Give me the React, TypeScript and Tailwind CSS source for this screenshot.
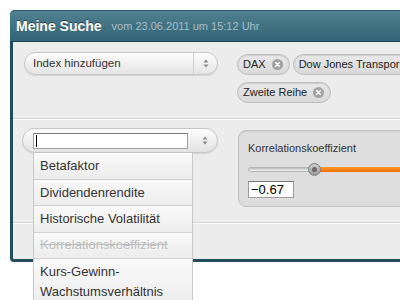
import React from "react";

const font = { fontFamily: '"Liberation Sans", Arial, sans-serif' };

function UpDown() {
  return (
    <svg width="6" height="9" viewBox="0 0 6 9">
      <path d="M3 0.5 L5.5 3.5 H0.5 Z" fill="#8a8a8a" />
      <path d="M3 8.5 L5.5 5.5 H0.5 Z" fill="#8a8a8a" />
    </svg>
  );
}

function CloseDot() {
  return (
    <span className="inline-flex items-center justify-center w-[11px] h-[11px] rounded-full bg-[#a3a3a3]">
      <svg width="5" height="5" viewBox="0 0 5 5">
        <path d="M0.7 0.7 L4.3 4.3 M4.3 0.7 L0.7 4.3" stroke="#fff" strokeWidth="1.4" strokeLinecap="round" />
      </svg>
    </span>
  );
}

function Tag({ label }: { label: string }) {
  return (
    <div className="shrink-0 flex items-center gap-[6px] h-[21px] pl-[5px] pr-[6px] rounded-full border border-[#bdbdbd] bg-gradient-to-b from-[#e9e9e9] to-[#d9d9d9] shadow-[inset_0_1px_1px_rgba(0,0,0,0.12)] text-[11px] text-[#222] whitespace-nowrap">
      <span>{label}</span>
      <CloseDot />
    </div>
  );
}

export default function App() {
  const items = ["Betafaktor", "Dividendenrendite", "Historische Volatilität"];
  return (
    <div className="w-[400px] h-[300px] bg-white overflow-hidden relative pt-[10px] pl-[10px]" style={font}>
      <div className="w-[430px] rounded-tl-[5px] rounded-bl-[4px] border-l-[3px] border-b-[3px] border-[#1f4d5d] bg-[#ececec]">
        {/* header */}
        <div className="h-[32px] -ml-[3px] rounded-tl-[5px] border-t border-b border-t-[#2a5a6b] border-b-[#1b4655] bg-gradient-to-b from-[#50818f] to-[#336476] flex items-center pl-[6px]">
          <span className="text-white font-bold text-[14px] [text-shadow:0_-1px_0_rgba(0,0,0,0.45)]">Meine Suche</span>
          <span className="ml-[10px] text-[11px] text-[#a8bfc8]">vom 23.06.2011 um 15:12 Uhr</span>
        </div>

        {/* section 1 */}
        <div className="h-[77px] flex items-start pt-[10px] border-b border-[#d6d6d6] shadow-[0_1px_0_#fafafa]">
          <div className="shrink-0 ml-[11px] w-[194px] h-[23px] rounded-full border border-[#c6c6c6] bg-gradient-to-b from-[#fdfdfd] to-[#e4e4e4] shadow-[0_1px_1px_rgba(0,0,0,0.1)] flex items-center">
            <span className="flex-1 pl-[8px] text-[11.5px] text-[#333]">Index hinzufügen</span>
            <span className="w-px h-[21px] bg-[#d0d0d0]" />
            <span className="w-[23px] flex justify-center"><UpDown /></span>
          </div>
          <div className="shrink-0 ml-[19px] mt-[2px] flex flex-col gap-[7px]">
            <div className="flex gap-[3px]">
              <Tag label="DAX" />
              <Tag label="Dow Jones Transport" />
            </div>
            <div className="flex">
              <Tag label="Zweite Reihe" />
            </div>
          </div>
        </div>

        {/* section 2 */}
        <div className="h-[104px] flex items-start border-b border-[#d6d6d6] shadow-[0_1px_0_#fafafa]">
          <div className="shrink-0 relative ml-[9px] mt-[9px] w-[196px] h-[25px] rounded-full border border-[#c6c6c6] bg-gradient-to-b from-[#fdfdfd] to-[#e2e2e2] shadow-[0_1px_1px_rgba(0,0,0,0.1)] flex items-center z-10">
            <div className="ml-[10px] w-[155px] h-[16px] bg-white border border-[#a0a0a0] border-t-[#7a7a7a] flex items-center pl-[2px]">
              <span className="w-px h-[12px] bg-black" />
            </div>
            <span className="flex-1 flex justify-center pl-[4px]"><UpDown /></span>
            <div className="absolute left-[10px] top-[24px] w-[160px] border-l border-r border-[#c8c8c8] bg-[#f2f2f2] text-[13px] text-[#333]">
              {items.map((t) => (
                <div key={t} className="h-[26.5px] flex items-center pl-[6px] border-b border-[#cfcfcf] bg-gradient-to-b from-[#fafafa] to-[#ececec]">{t}</div>
              ))}
              <div className="h-[26px] flex items-center pl-[6px] border-b border-[#cfcfcf] bg-gradient-to-b from-[#fafafa] to-[#ececec] text-[#bdbdbd] line-through">Korrelationskoeffizient</div>
              <div className="pl-[6px] pt-[3px] pb-[6px] leading-[20px] bg-gradient-to-b from-[#fafafa] to-[#ececec]">Kurs-Gewinn-<br />Wachstumsverhältnis</div>
            </div>
          </div>
          <div className="shrink-0 ml-[20px] mt-[11px] w-[200px] h-[77px] rounded-[8px] border border-[#c2c2c2] bg-[#dedede] shadow-[inset_0_1px_2px_rgba(0,0,0,0.08)] pl-[9px] pt-[9px]">
            <div className="text-[11px] text-[#333]">Korrelationskoeffizient</div>
            <div className="relative h-[13px] mt-[6px]">
              <div className="absolute left-0 top-[4px] w-[66px] h-[5px] rounded-l-full bg-gradient-to-b from-[#bdbdbd] to-[#f4f4f4] border border-[#b5b5b5]" />
              <div className="absolute left-[66px] top-[4px] right-0 h-[5px] bg-gradient-to-b from-[#ff9a2a] to-[#ee6e00]" />
              <div className="absolute left-[60px] top-0 w-[13px] h-[13px] rounded-full border border-[#7d7d7d] bg-gradient-to-b from-[#cfcfcf] to-[#9a9a9a] flex items-center justify-center">
                <span className="w-[5px] h-[5px] rounded-full bg-[#6a6a6a]" />
              </div>
            </div>
            <div className="mt-[5px] w-[46px] h-[17px] bg-white border border-[#9c9c9c] border-t-[#777] text-[13px] text-black leading-[15px] pl-[2px]">−0.67</div>
          </div>
        </div>

        {/* footer */}
        <div className="h-[36px]" />
      </div>
    </div>
  );
}
